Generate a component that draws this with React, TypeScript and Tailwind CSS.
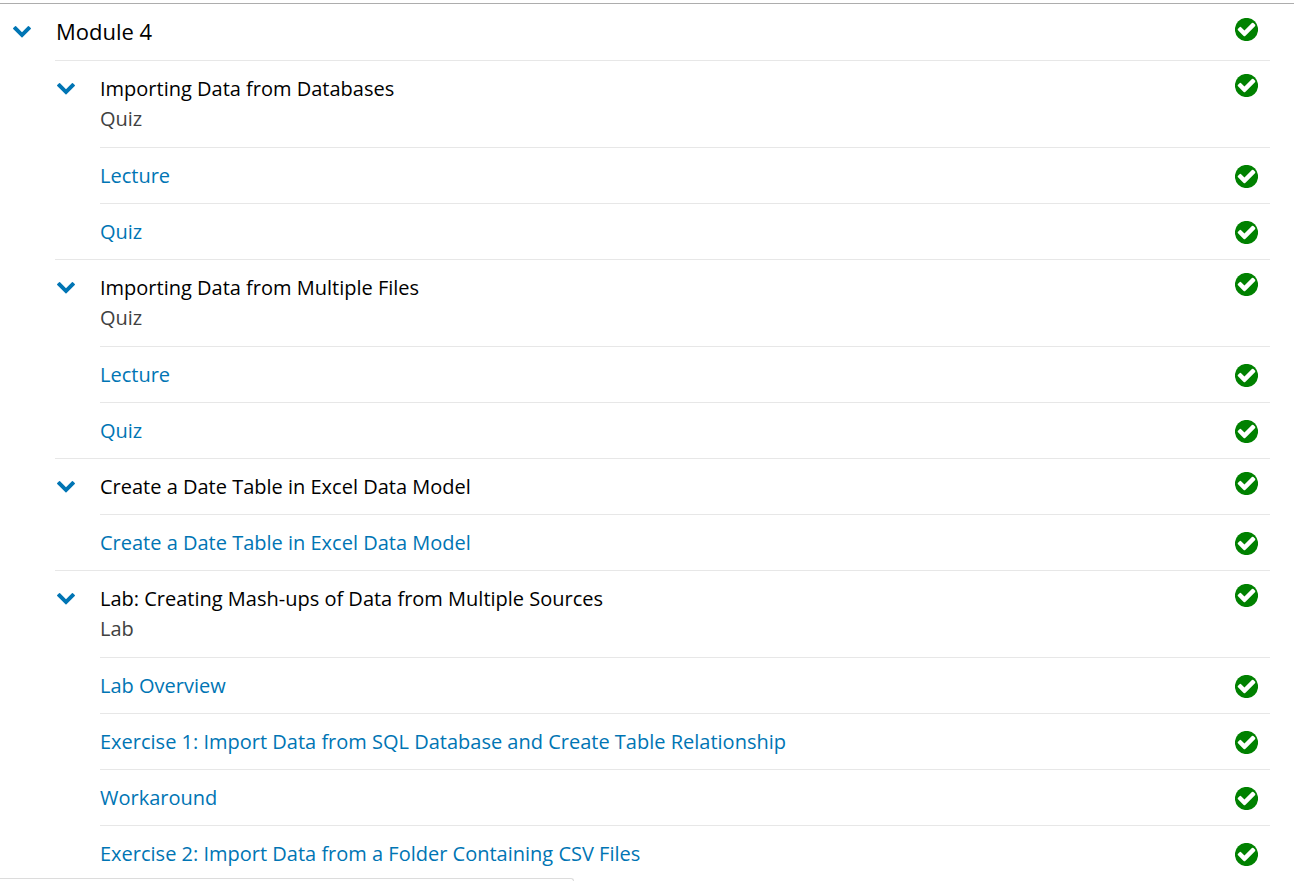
import { useState } from "react";

type Section = { title: string; subtitle?: string; items: string[] };

const sections: Section[] = [
  { title: "Importing Data from Databases", subtitle: "Quiz", items: ["Lecture", "Quiz"] },
  { title: "Importing Data from Multiple Files", subtitle: "Quiz", items: ["Lecture", "Quiz"] },
  { title: "Create a Date Table in Excel Data Model", items: ["Create a Date Table in Excel Data Model"] },
  {
    title: "Lab: Creating Mash-ups of Data from Multiple Sources",
    subtitle: "Lab",
    items: [
      "Lab Overview",
      "Exercise 1: Import Data from SQL Database and Create Table Relationship",
      "Workaround",
      "Exercise 2: Import Data from a Folder Containing CSV Files",
    ],
  },
];

function Chevron({ open }: { open: boolean }) {
  return (
    <svg viewBox="0 174 1792 1792" className={open ? "size-5" : "size-5 -rotate-90"} fill="#0075b4" aria-hidden="true">
      <path d="M1683 808l-742 741q-19 19-45 19t-45-19l-742-741q-19-19-19-45.500t19-45.500l166-165q19-19 45-19t45 19l531 531 531-531q19-19 45-19t45 19l166 165q19 19 19 45.500t-19 45.500z" />
    </svg>
  );
}

function CheckCircle() {
  return (
    <svg viewBox="0 0 23 23" className="size-[23px] shrink-0" role="img" aria-label="Completed">
      <circle cx="11.5" cy="11.5" r="11.6" fill="#008100" />
      <path
        transform="translate(1.33 0.97) scale(0.01135)"
        fill="#fff"
        d="M1671 566q0 40-28 68l-724 724-136 136q-28 28-68 28t-68-28l-136-136-362-362q-28-28-28-68t28-68l136-136q28-28 68-28t68 28l294 295 656-657q28-28 68-28t68 28l136 136q28 28 28 68z"
      />
    </svg>
  );
}

function SectionBlock({ section }: { section: Section }) {
  const [open, setOpen] = useState(true);
  return (
    <li>
      <button
        type="button"
        aria-expanded={open}
        onClick={() => setOpen(!open)}
        className="flex w-full items-start border-t border-[#e7e7e7] pt-[13px] pr-3 pb-3 text-left"
      >
        <span className="flex h-[30px] w-[45px] shrink-0 items-center pl-px">
          <Chevron open={open} />
        </span>
        <span className="flex-1 leading-[30px]">
          <span className="block text-black">{section.title}</span>
          {section.subtitle && <span className="block pb-px text-[#414141]">{section.subtitle}</span>}
        </span>
        <CheckCircle />
      </button>
      {open && (
        <ul className="ml-[45px]">
          {section.items.map((item) => (
            <li key={item}>
              <a
                href="#"
                className="flex items-center justify-between border-t border-[#e7e7e7] pt-[13px] pr-3 pb-3 leading-[30px] text-[#0075b4] hover:underline"
              >
                {item}
                <CheckCircle />
              </a>
            </li>
          ))}
        </ul>
      )}
    </li>
  );
}

export default function App() {
  const [open, setOpen] = useState(true);
  return (
    <div className="relative h-screen overflow-hidden bg-white font-['Open_Sans','Liberation_Sans',sans-serif] text-[20px]">
      <main className="mt-[3px] border-t border-[#adadad] pr-6">
        <button
          type="button"
          aria-expanded={open}
          onClick={() => setOpen(!open)}
          className="flex w-full items-start py-[14px] pr-3 pl-3 text-left"
        >
          <span className="flex h-[28px] w-[44px] shrink-0 items-center">
            <Chevron open={open} />
          </span>
          <span className="flex-1 text-[22px] leading-[26px] text-black">Module 4</span>
          <CheckCircle />
        </button>
        {open && (
          <ul className="ml-[55px]">
            {sections.map((section) => (
              <SectionBlock key={section.title} section={section} />
            ))}
          </ul>
        )}
      </main>
      <div className="absolute bottom-0 left-0 h-[3px] w-[574px] rounded-tr-[6px] border-t border-r border-[#dcdcdc] bg-white" />
    </div>
  );
}
